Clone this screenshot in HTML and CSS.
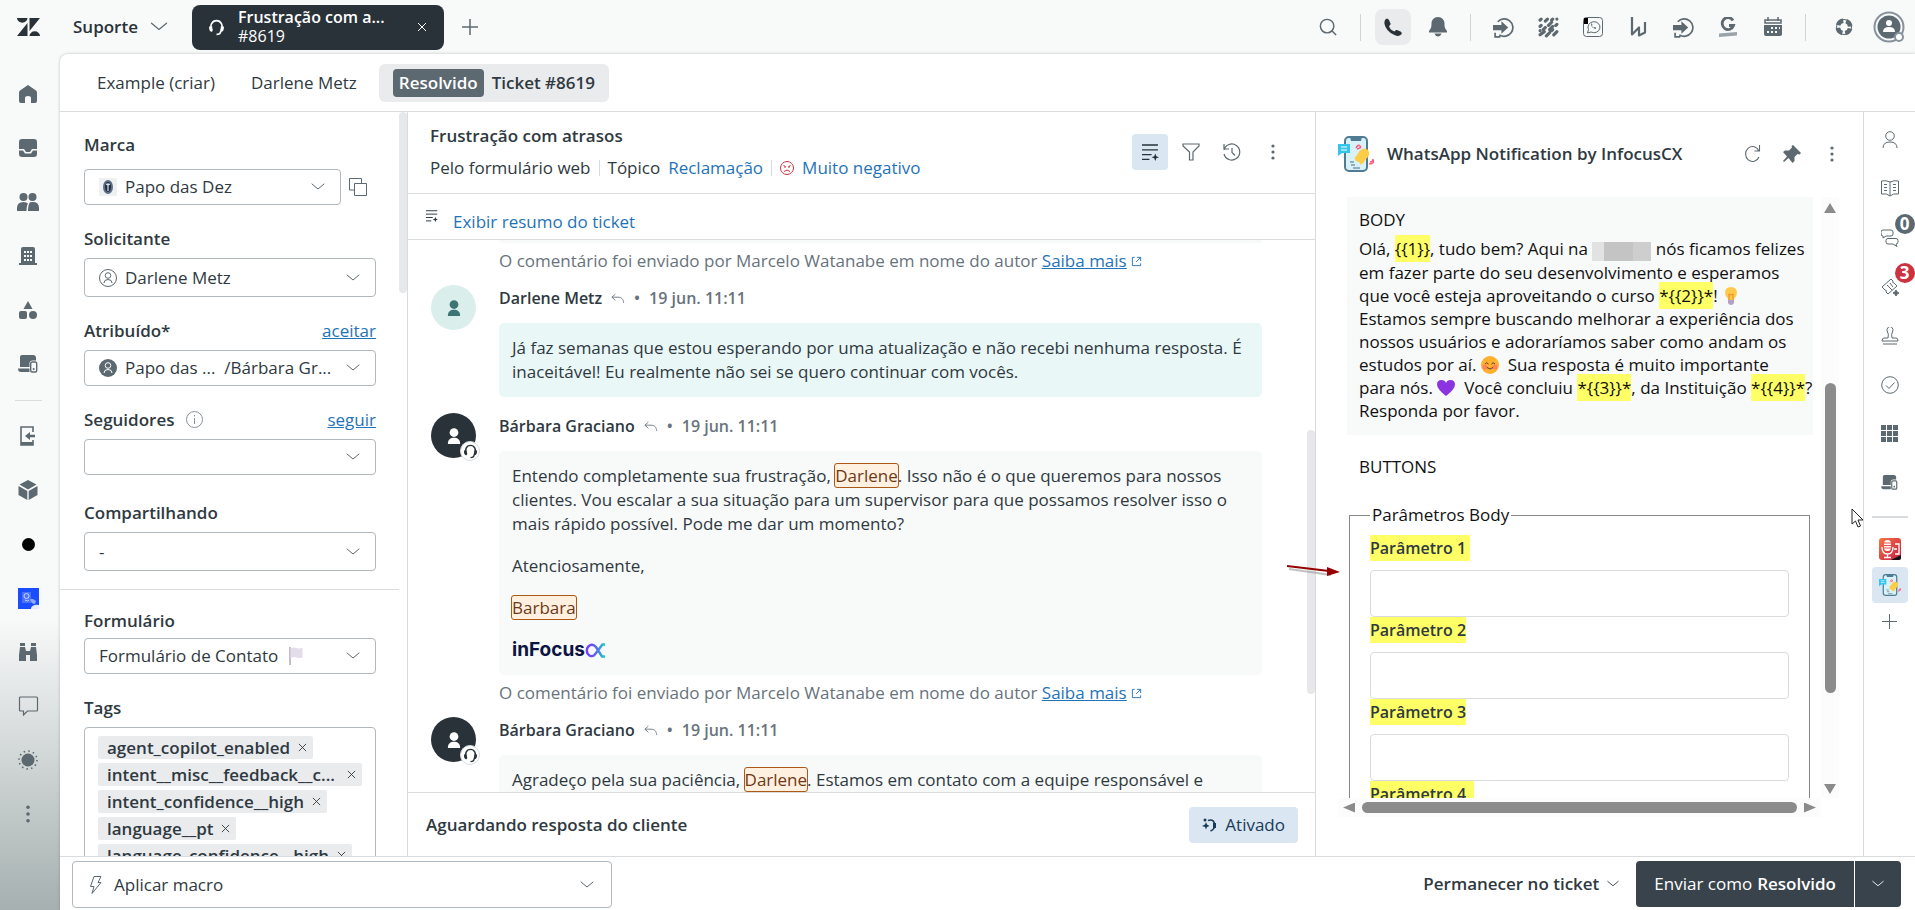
FILE: index.html
```html
<!DOCTYPE html>
<html lang="pt-BR">

<head>
  <meta charset="UTF-8" />
  <meta name="viewport" content="width=device-width, initial-scale=1.0" />
  <title>Frustração com atrasos #8619</title>
  <link rel="stylesheet" href="styles.css">
</head>

<body>
  <!-- icons used more than once -->
  <svg class="sprite" aria-hidden="true">
    <symbol id="chevron" viewBox="0 0 16 16">
      <path d="M2 5l6 5 6-5" fill="none" stroke="currentColor" stroke-linecap="round" />
    </symbol>
    <symbol id="person" viewBox="0 0 16 20">
      <circle cx="8" cy="6" r="5" />
      <path d="M1 19c0-5 3-7 7-7s7 2 7 7z" />
    </symbol>
    <symbol id="headset" viewBox="0 0 16 16">
      <path d="M4 11C1 6 4 1.500 8 1.500S15 6 12 11M12 11c0 2-1 3.500-4 3.500" fill="none" stroke="currentColor" stroke-width="1.500" />
      <path d="M1 7l3 0v5c-2 0-3-1-3-5zM15 7h-3v5c2 0 3-1 3-5z" />
    </symbol>
    <symbol id="dots" viewBox="0 0 16 16">
      <circle cx="8" cy="2" r="1.600" /><circle cx="8" cy="8" r="1.600" /><circle cx="8" cy="14" r="1.600" />
    </symbol>
    <symbol id="reply" viewBox="0 0 16 12">
      <path d="M5 1L1 4.500 5 8M1 4.500h7c4 0 6 2 6.500 6.500" fill="none" stroke="currentColor" />
    </symbol>
    <symbol id="external" viewBox="0 0 12 12">
      <path d="M4 1.500H1.500v9h9V8M6.500 1.500h4v4M10.500 1.500L5.500 6.500" fill="none" stroke="currentColor" />
    </symbol>
    <symbol id="summary" viewBox="0 0 16 16">
      <path d="M0 1h15M0 5.500h15M0 10h9M0 14.500h7" fill="none" stroke="currentColor" stroke-width="1.300" />
      <path d="M12.500 9l1 2.500 2.500 1-2.500 1-1 2.500-1-2.500-2.500-1 2.500-1z" />
    </symbol>
    <symbol id="laptop" viewBox="0 0 20 18">
      <path d="M4 0h11q3 0 3 3v2.500h-3.500q-3 0-3 3V12H2V2q0-2 2-2zM0 13.500h11.500V17H3q-3 0-3-3.500z" />
      <rect x="12.700" y="7" width="6" height="10" rx="1.500" fill="none" stroke="currentColor" stroke-width="1.400" />
      <circle cx="15.700" cy="14" r="1" />
    </symbol>
    <symbol id="enter" viewBox="0 0 20 20">
      <path d="M4.500 4.500a8.300 8.300 0 1 1 1.500 12.500M2 15v4h5" fill="none" stroke="currentColor" stroke-width="1.600" />
      <path d="M0 7.500h8V4l6.500 6L8 16v-3.500H0z" />
    </symbol>
    <symbol id="cross" viewBox="0 0 10 10">
      <path d="M1 1l8 8M9 1L1 9" fill="none" stroke="currentColor" />
    </symbol>
    <symbol id="app" viewBox="0 0 36 36">
      <rect x="7" y="1" width="22" height="34" rx="4" fill="#d9f1f8" stroke="#4f7c93" stroke-width="2" />
      <path d="M12 1h12l-1 4H13z" fill="#4f7c93" />
      <path d="M12 26h4M13 29h4M15 32h7" stroke="#8fb0bd" stroke-width="2" />
      <path d="M0 8h12v9H4l-4 3z" fill="#35c6ef" />
      <path d="M3 11h6M3 14h6" stroke="#fff" />
      <path d="M17 21c3-1 3-7 8-8 4-1 7 2 6 6-1 3-4 4-5 7l-3 3-2-3c-2 0-5-2-4-5z" fill="#ffcc45" />
      <path d="M18 12q2-4 4-2t-3 3M32 26q3 0 3-3M31 28q5 0 5-4" fill="none" stroke="#ff5b7c" stroke-width="1.500" />
    </symbol>
  </svg>

  <header class="topbar">
    <a class="brand" href="#" aria-label="Início">
      <svg width="23" height="18" viewBox="0 0 23 18"><path d="M0 0h10.500a5 4.500 0 0 1-10.500 0zM12.500 0H23L12.500 13zM10.500 5v13H0zM12.500 18a5 4.500 0 0 1 10.500 0z" /></svg>
    </a>
    <button class="product">Suporte <svg width="20" height="20"><use href="#chevron" /></svg></button>
    <div class="worktab">
      <svg width="17" height="17"><use href="#headset" /></svg>
      <div class="worktab-text"><b>Frustração com a...</b><span>#8619</span></div>
      <button aria-label="Fechar"><svg width="10" height="10"><use href="#cross" /></svg></button>
    </div>
    <button class="add" aria-label="Adicionar"><svg width="18" height="18" viewBox="0 0 18 18"><path d="M9 1v16M1 9h16" fill="none" stroke="currentColor" stroke-width="1.500" /></svg></button>
    <nav class="tools">
      <button aria-label="Pesquisar"><svg width="18" height="18" viewBox="0 0 20 20"><circle cx="9" cy="9" r="7.500" fill="none" stroke="currentColor" stroke-width="1.600" /><path d="M14 14l5 5" stroke="currentColor" stroke-width="1.600" /></svg></button>
      <i class="sep"></i>
      <button class="on" aria-label="Telefone"><svg width="18" height="18" viewBox="0 0 18 18"><path d="M1 2q2-3 4 0l1.500 3.500q.5 1.500-1.500 2.500 1 4 5.500 5.500 1-2 2.500-1.500l3.500 1.500q2.500 1.500 0 3.500-3 2-7-.5Q2 13 .5 6 .2 3.500 1 2z" /></svg></button>
      <button aria-label="Notificações"><svg width="18" height="20" viewBox="0 0 18 20"><path d="M9 0c4 0 6.500 3 6.500 6.500 0 4 .5 5 2.500 7.500v1.500H0V14c2-2.500 2.500-3.500 2.500-7.500C2.500 3 5 0 9 0zM5.500 16.500h7q-1 3-3.500 3t-3.500-3z" /></svg></button>
      <i class="sep"></i>
      <button aria-label="Redirecionar"><svg width="21" height="21"><use href="#enter" /></svg></button>
      <button aria-label="Padrões"><svg width="21" height="21" viewBox="0 0 20 20"><g fill="none" stroke="currentColor" stroke-width="3" stroke-linecap="round"><path d="M2 3l1-1M2 9l1-1M7 4l2-2M13 3l1-1M18 2v0M5 12l2-2M10 8l3-3M17 8l1-1M2 17l4-3M8 18l3-3M11 12l3-3M15 17l3-3M2 13v0M13 13l1-1" /></g></svg></button>
      <button aria-label="WhatsApp"><svg width="20" height="20" viewBox="0 0 20 20"><rect x=".5" y=".5" width="19" height="19" rx="3" fill="none" stroke="currentColor" /><path d="M4.500 16l1-3.500a6 5.500 0 1 1 2.500 2.500z" fill="none" stroke="currentColor" /><path d="M8 6.500q0 4.500 5 5.500v-1.500l-1.500-.5-1 .7-1.700-1.700.7-1-.7-1.500z" /><path d="M1 1h4v6H1z" fill="#000" /></svg></button>
      <button aria-label="Wiki"><svg width="17" height="20" viewBox="0 0 17 20"><path d="M2 0v17.500l7-7v8l6-3V5" fill="none" stroke="currentColor" stroke-width="2.200" stroke-linejoin="round" /></svg></button>
      <button aria-label="Encaminhar"><svg width="21" height="21"><use href="#enter" /></svg></button>
      <button aria-label="Google"><svg width="20" height="20" viewBox="0 0 20 20"><path d="M15 3.500a5.800 6 0 1 0 .5 5H11" fill="none" stroke="currentColor" stroke-width="2.800" /><path d="M1 16.500l18-1.500v3.500L1 20z" opacity=".6" /></svg></button>
      <button aria-label="Calendário"><svg width="20" height="20" viewBox="0 0 20 20"><path d="M1 8h18v9q0 2-2 2H3q-2 0-2-2z" /><path d="M2 3h16v3H2zM5 0v4M15 0v4" fill="none" stroke="currentColor" stroke-width="1.500" /><path d="M8 11h2m2 0h2m2 0h1M4 15h2m2 0h2m2 0h2" stroke="#f8f9f9" stroke-width="2" /></svg></button>
      <i class="sep last"></i>
      <button aria-label="Ajuda"><svg width="18" height="18" viewBox="0 0 18 18"><circle cx="9" cy="9" r="6.200" fill="none" stroke="currentColor" stroke-width="4.500" stroke-dasharray="6.740 3" stroke-dashoffset="-1.500" /><circle cx="9" cy="9" r="7.500" fill="none" stroke="currentColor" /></svg></button>
      <button class="me" aria-label="Perfil"><svg width="32" height="32" viewBox="0 0 32 32"><circle cx="16" cy="16" r="14.500" fill="none" stroke="#87929d" stroke-width="2" /><circle cx="16" cy="16" r="11.500" /><circle cx="16" cy="12" r="3" fill="#fff" /><path d="M10 21q0-5 6-5t6 5z" fill="#fff" /><circle cx="26" cy="26" r="4" fill="#fff" stroke="#87929d" stroke-width="2" /></svg></button>
    </nav>
  </header>

  <div class="shell">
    <nav class="rail">
      <a href="#" aria-label="Página inicial"><svg width="18" height="18" viewBox="0 0 18 18"><path d="M9 0l8 5.500q1 1 1 2V16q0 2-2 2h-4v-5q0-2-3-2t-3 2v5H2q-2 0-2-2V7.500q0-1 1-2z" /></svg></a>
      <a href="#" aria-label="Visualizações"><svg width="18" height="18" viewBox="0 0 18 18"><path d="M3 0h12q3 0 3 3v7h-5l-2 3H7l-2-3H0V3q0-3 3-3z" /><path d="M0 11.500h4l2 3h6l2-3h4V15q0 3-3 3H3q-3 0-3-3z" /></svg></a>
      <a href="#" aria-label="Clientes"><svg width="22" height="18" viewBox="0 0 22 18"><circle cx="6.500" cy="4" r="4" /><circle cx="15.500" cy="4" r="4" /><path d="M0 18v-3q0-6 6.500-6 3 0 4.500 1.500-1.500 2-1.500 7.500zM11 18q0-6 2-8.700Q22 8 22 15v3z" /></svg></a>
      <a href="#" aria-label="Organizações"><svg width="18" height="18" viewBox="0 0 18 18"><path fill-rule="evenodd" d="M4 0h10q2 0 2 2v14h2v2H0v-2h2V2q0-2 2-2zM5 4v2h2V4zm3 0v2h2V4zm3 0v2h2V4zM5 8v2h2V8zm3 0v2h2V8zm3 0v2h2V8zm-6 4v2h2v-2zm3 0v2h2v-2zm3 0v2h2v-2z" /></svg></a>
      <a href="#" aria-label="Objetos"><svg width="18" height="18" viewBox="0 0 18 18"><path d="M9 0l4.500 8h-9z" /><rect y="10" width="8" height="8" rx="2" /><circle cx="14" cy="14" r="4" /></svg></a>
      <a href="#" aria-label="Ativos"><svg width="20" height="18"><use href="#laptop" /></svg></a>
      <hr />
      <a href="#" aria-label="Receber"><svg width="18" height="20" viewBox="0 0 18 20"><path d="M14 6V1H2v18h12v-5" fill="none" stroke="currentColor" stroke-width="1.600" /><path d="M2 16h12v3H2zM6 10l5-4v2.700h5v2.600h-5V14z" /></svg></a>
      <a href="#" aria-label="Pacotes"><svg width="20" height="20" viewBox="0 0 20 20"><path d="M10 0l8.500 4.500L10 9.500 1.500 4.500zM.5 6l8.800 5v9L.5 15zM19.500 6l-8.800 5v9l8.800-5z" /></svg></a>
      <a href="#" aria-label="Gravador"><svg width="13" height="13" viewBox="0 0 13 13"><circle cx="6.500" cy="6.500" r="6.500" fill="#000" /></svg></a>
      <a href="#" aria-label="Chamadas"><svg width="21" height="21" viewBox="0 0 21 21"><path d="M0 0h21v21H0z" fill="#1a4dff" /><path d="M4 4h9v11H4z" fill="#4a72ff" /><circle cx="8.500" cy="8" r="2.500" fill="none" stroke="#c9d6ff" /><path d="M7 12q3 2 4 0" fill="none" stroke="#c9d6ff" /><path d="M12 11q1 5 5 5l1-3-3-2z" fill="#8fa9ff" /><path d="M13 20q2-4 8-3v4h-8z" fill="#e6ecff" /></svg></a>
      <a href="#" aria-label="Explorar"><svg width="18" height="18" viewBox="0 0 18 18"><path d="M1 0h5v3H1zM12 0h5v3h-5zM1 4h5l1 4h4l1-4h5l1 8v6h-7v-6H7v6H0v-6z" /></svg></a>
      <a href="#" aria-label="Mensagens"><svg width="21" height="20" viewBox="0 0 20 20"><path d="M2 1h16q1 0 1 1v12q0 1-1 1H9l-4 4v-4H2q-1 0-1-1V2q0-1 1-1z" fill="none" stroke="currentColor" stroke-width="1.200" /></svg></a>
      <a href="#" aria-label="Tema"><svg width="20" height="20" viewBox="0 0 20 20"><circle cx="10" cy="10" r="6.500" /><circle cx="10" cy="10" r="9" fill="none" stroke="currentColor" stroke-width="1.600" stroke-dasharray="1.500 3.212" /></svg></a>
      <a href="#" aria-label="Mais"><svg width="18" height="18"><use href="#dots" /></svg></a>
    </nav>

    <main class="card">
      <div class="crumbs">
        <a href="#">Example (criar)</a>
        <a href="#">Darlene Metz</a>
        <a class="current" href="#"><span class="status">Resolvido</span>Ticket #8619</a>
      </div>

      <div class="columns">
        <aside class="fields">
          <div class="field first">
            <div class="label-row"><label for="brand">Marca</label></div>
            <div class="brand-row">
              <div class="select">
                <svg width="18" height="18" viewBox="0 0 18 18"><path d="M0 0h18v18H0z" fill="#eff0f2" /><ellipse cx="9" cy="9" rx="5" ry="7" fill="#5d6e88" /><ellipse cx="9" cy="9" rx="3" ry="5" fill="#202d47" /><path d="M9 5v8M7 6q2 2 4 0" fill="none" stroke="#fff" /></svg>
                <select id="brand"><option>Papo das Dez</option></select>
                <svg class="caret" width="16" height="16"><use href="#chevron" /></svg>
              </div>
              <button class="copy" aria-label="Copiar"><svg width="18" height="18" viewBox="0 0 18 18"><path d="M5 12H.5V.5h12V5M5.500 5.500h12v12h-12z" fill="none" stroke="currentColor" /></svg></button>
            </div>
          </div>
          <div class="field">
            <div class="label-row"><label for="requester">Solicitante</label></div>
            <div class="select tall">
              <svg class="line" width="18" height="18" viewBox="0 0 18 18"><circle cx="9" cy="9" r="8.500" /><circle cx="9" cy="6.500" r="2.800" /><path d="M5 14q0-3.500 4-3.500t4 3.500" /></svg>
              <select id="requester"><option>Darlene Metz</option></select>
              <svg class="caret" width="16" height="16"><use href="#chevron" /></svg>
            </div>
          </div>
          <div class="field">
            <div class="label-row"><label for="assignee">Atribuído*</label><a href="#">aceitar</a></div>
            <div class="select">
              <svg width="18" height="18" viewBox="0 0 18 18"><circle cx="9" cy="9" r="9" /><g fill="none" stroke="#fff"><circle cx="9" cy="6.500" r="2.800" /><path d="M5 14q0-3.500 4-3.500t4 3.500" /></g></svg>
              <select id="assignee"><option>Papo das ... &nbsp;/Bárbara Gr...</option></select>
              <svg class="caret" width="16" height="16"><use href="#chevron" /></svg>
            </div>
          </div>
          <div class="field wide-gap">
            <div class="label-row"><label for="followers">Seguidores</label>
              <svg class="line info" width="17" height="17" viewBox="0 0 17 17"><circle cx="8.500" cy="8.500" r="8" /><path d="M8.500 7v6M8.500 4v1.500" /></svg>
              <a href="#">seguir</a></div>
            <div class="select">
              <select id="followers"><option></option></select>
              <svg class="caret" width="16" height="16"><use href="#chevron" /></svg>
            </div>
          </div>
          <div class="field">
            <div class="label-row"><label for="sharing">Compartilhando</label></div>
            <div class="select tall">
              <select id="sharing"><option>-</option></select>
              <svg class="caret" width="16" height="16"><use href="#chevron" /></svg>
            </div>
          </div>
          <hr />
          <div class="field">
            <div class="label-row"><label for="form">Formulário</label></div>
            <div class="select">
              <select id="form"><option>Formulário de Contato</option></select>
              <svg class="flag" width="16" height="18" viewBox="0 0 16 18"><path d="M1 0v18" stroke="#8c7f8e" /><path d="M1.500 1q4-1 6 0t6-.5v10q-4 1-6 0t-6 .5z" fill="#e3dcea" /></svg>
              <svg class="caret" width="16" height="16"><use href="#chevron" /></svg>
            </div>
          </div>
          <div class="field">
            <div class="label-row"><label for="tags">Tags</label></div>
            <div class="tags">
              <span class="tag">agent_copilot_enabled<button aria-label="Remover"><svg width="9" height="9"><use href="#cross" /></svg></button></span>
              <span class="tag full">intent__misc__feedback__c...<button aria-label="Remover"><svg width="9" height="9"><use href="#cross" /></svg></button></span>
              <span class="tag">intent_confidence__high<button aria-label="Remover"><svg width="9" height="9"><use href="#cross" /></svg></button></span>
              <span class="tag">language__pt<button aria-label="Remover"><svg width="9" height="9"><use href="#cross" /></svg></button></span>
              <span class="tag">language_confidence__high<button aria-label="Remover"><svg width="9" height="9"><use href="#cross" /></svg></button></span>
              <input id="tags" type="text" />
            </div>
          </div>
          <i class="thumb"></i>
        </aside>

        <section class="ticket">
          <div class="ticket-head">
            <div>
              <h1>Frustração com atrasos</h1>
              <div class="meta">
                <span>Pelo formulário web</span><i></i>
                <span>Tópico</span><a href="#">Reclamação</a><i></i>
                <svg class="line sad" width="14" height="14" viewBox="0 0 14 14"><circle cx="7" cy="7" r="6.500" /><path d="M4 10.500q3-3 6 0M3.500 4l2 2M10.500 4l-2 2M4 6h2M8 6h2" /></svg>
                <a href="#">Muito negativo</a>
              </div>
            </div>
            <div class="head-tools">
              <button class="on" aria-label="Resumo"><svg width="17" height="17"><use href="#summary" /></svg></button>
              <button aria-label="Filtrar"><svg width="18" height="18" viewBox="0 0 18 18"><path d="M1 1h16v2l-6 6v8H7.500V9L1 3z" fill="none" stroke="currentColor" stroke-width="1.200" /></svg></button>
              <button aria-label="Histórico"><svg width="18" height="18" viewBox="0 0 18 18"><path d="M1 7a8 8 0 1 1 0 4M1 1v5h5M9 5v4.500l3 3" fill="none" stroke="currentColor" stroke-width="1.200" /></svg></button>
              <button aria-label="Mais opções"><svg width="16" height="16"><use href="#dots" /></svg></button>
            </div>
          </div>
          <div class="summary"><svg width="12" height="12"><use href="#summary" /></svg><a href="#">Exibir resumo do ticket</a></div>

          <div class="log">
            <div class="previous"></div>
            <p class="note">O comentário foi enviado por Marcelo Watanabe em nome do autor <a href="#">Saiba mais</a> <svg width="11" height="11"><use href="#external" /></svg></p>
            <article class="message customer">
              <div class="avatar"><svg width="14" height="18"><use href="#person" /></svg></div>
              <div class="content">
                <div class="author"><b>Darlene Metz</b><svg width="14" height="11"><use href="#reply" /></svg><span>•</span><time>19 jun. 11:11</time></div>
                <div class="bubble"><p>Já faz semanas que estou esperando por uma atualização e não recebi nenhuma resposta. É<br>inaceitável! Eu realmente não sei se quero continuar com vocês.</p></div>
              </div>
            </article>
            <article class="message">
              <div class="avatar"><svg width="14" height="18"><use href="#person" /></svg><i class="agent"><svg width="15" height="15"><use href="#headset" /></svg></i></div>
              <div class="content">
                <div class="author"><b>Bárbara Graciano</b><svg width="14" height="11"><use href="#reply" /></svg><span>•</span><time>19 jun. 11:11</time></div>
                <div class="bubble">
                  <p>Entendo completamente sua frustração, <mark>Darlene</mark>. Isso não é o que queremos para nossos<br>clientes. Vou escalar a sua situação para um supervisor para que possamos resolver isso o<br>mais rápido possível. Pode me dar um momento?</p>
                  <p>Atenciosamente,</p>
                  <p><mark>Barbara</mark></p>
                  <p class="sign">inFocus<svg width="21" height="15" viewBox="0 0 21 15">
                      <defs>
                        <linearGradient id="cx"><stop offset="0" stop-color="#7a3cff" /><stop offset=".5" stop-color="#5a63f5" /><stop offset="1" stop-color="#18d3c0" /></linearGradient>
                      </defs>
                      <path d="M20 1.500h-2.500L9.500 12Q7 14 4.500 12.500a6 6 0 0 1 0-10Q8 .5 11 4l6 9.500h3" fill="none" stroke="url(#cx)" stroke-width="2.400" />
                    </svg></p>
                </div>
              </div>
            </article>
            <p class="note">O comentário foi enviado por Marcelo Watanabe em nome do autor <a href="#">Saiba mais</a> <svg width="11" height="11"><use href="#external" /></svg></p>
            <article class="message">
              <div class="avatar"><svg width="14" height="18"><use href="#person" /></svg><i class="agent"><svg width="15" height="15"><use href="#headset" /></svg></i></div>
              <div class="content">
                <div class="author"><b>Bárbara Graciano</b><svg width="14" height="11"><use href="#reply" /></svg><span>•</span><time>19 jun. 11:11</time></div>
                <div class="bubble"><p>Agradeço pela sua paciência, <mark>Darlene</mark>. Estamos em contato com a equipe responsável e</p></div>
              </div>
            </article>
            <i class="thumb"></i>
          </div>

          <div class="waiting">
            <b>Aguardando resposta do cliente</b>
            <button><svg width="14" height="14" viewBox="0 0 14 14"><circle cx="3" cy="2" r="1.500" /><path d="M4 4l1 2.500L7.500 8 5 9l-1 2.500L3 9 0 8l3-1.500z" /><path d="M6 2.500q5-2 6.500 3t-4 7.500" fill="none" stroke="currentColor" stroke-width="1.500" /><path d="M11 5h3v5h-3z" /></svg>Ativado</button>
          </div>
        </section>

        <section class="app">
          <div class="app-head">
            <svg width="36" height="36"><use href="#app" /></svg>
            <h2>WhatsApp Notification by InfocusCX</h2>
            <button aria-label="Atualizar"><svg width="17" height="18" viewBox="0 0 17 18"><path d="M15 12a7 7.500 0 1 1 0-6M15.500 0v6h-5" fill="none" stroke="currentColor" stroke-width="1.100" /></svg></button>
            <button aria-label="Fixar"><svg width="18" height="18" viewBox="0 0 18 18"><path d="M10 0l8 8-1.500 1.500-2-.5-3 3 0 4-2 2-4-5L1 17l-1-1 4-4.500-4-4.500 2-1.500h4l3-3L8.500 1z" /></svg></button>
            <button aria-label="Mais opções"><svg width="16" height="16"><use href="#dots" /></svg></button>
          </div>
          <div class="frame">
            <div class="doc">
              <div class="template">
                <h3>BODY</h3>
                <p>Olá, <mark>{{1}}</mark>, tudo bem? Aqui na <span class="redacted"></span> nós ficamos felizes<br>
                  em fazer parte do seu desenvolvimento e esperamos<br>
                  que você esteja aproveitando o curso <mark>*{{2}}*</mark>! <svg class="emoji" width="18" height="18" viewBox="0 0 18 18"><path d="M9 0q6 0 6 6 0 3-3 5.500V13H6v-1.500Q3 9 3 6q0-6 6-6z" fill="#ffc94d" /><path d="M7 13V7l2 1 2-1v6" fill="none" stroke="#e98a1c" /><path d="M6 13h6v3q-1 2-3 2t-3-2z" fill="#b3a0c9" /></svg><br>
                  Estamos sempre buscando melhorar a experiência dos<br>
                  nossos usuários e adoraríamos saber como andam os<br>
                  estudos por aí. <svg class="emoji" width="18" height="18" viewBox="0 0 18 18"><circle cx="9" cy="9" r="9" fill="#ffb02e" /><circle cx="4" cy="11" r="2.500" fill="#ff8257" /><circle cx="14" cy="11" r="2.500" fill="#ff8257" /><path d="M4 8q1.500-2.500 3.500 0M10.500 8q1.500-2.500 3.500 0M6 11.500q3 3 6 0" fill="none" stroke="#5b3a2e" /></svg>&nbsp; Sua resposta é muito importante<br>
                  para nós. <svg class="emoji" width="18" height="18" viewBox="0 0 18 18"><path d="M9 17Q0 10 0 5.500 0 1 4.500 1 8 1 9 4q1-3 4.500-3Q18 1 18 5.500 18 10 9 17z" fill="#8b35e0" /></svg>&nbsp; Você concluiu <mark>*{{3}}*</mark>, da Instituição <mark>*{{4}}*</mark>?<br>
                  Responda por favor.</p>
              </div>
              <h3 class="buttons-title">BUTTONS</h3>
              <fieldset>
                <legend>Parâmetros Body</legend>
                <label for="p1"><mark>Parâmetro 1&nbsp;</mark></label>
                <input id="p1" type="text" />
                <label for="p2"><mark>Parâmetro 2</mark></label>
                <input id="p2" type="text" />
                <label for="p3"><mark>Parâmetro 3</mark></label>
                <input id="p3" type="text" />
                <label for="p4"><mark>Parâmetro 4&nbsp;&nbsp;</mark></label>
                <input id="p4" type="text" />
              </fieldset>
            </div>
            <div class="vbar"><i class="arrow up"></i><i class="bar"></i><i class="arrow down"></i></div>
            <div class="hbar"><i class="arrow left"></i><i class="bar"></i><i class="arrow right"></i></div>
          </div>
          <svg class="pointer-line" width="58" height="16" viewBox="0 0 58 16"><path d="M3 5l42 6" stroke="#999" stroke-width="2" opacity=".6" /><path d="M1 2l42 5" stroke="#960000" stroke-width="2" /><path d="M41 3l13 5-13 4z" fill="#960000" /></svg>
          <svg class="cursor" width="13" height="20" viewBox="0 0 13 20"><path d="M1 1v15l3.500-3 2.500 6 2.500-1L7 12h5z" fill="#fff" stroke="#222" /></svg>
        </section>

        <nav class="apps">
          <button aria-label="Usuário"><svg width="16" height="18" viewBox="0 0 16 18"><circle cx="8" cy="5" r="4.300" /><path d="M1 17q0-6 7-6t7 6" /></svg></button>
          <button aria-label="Conhecimento"><svg width="18" height="17" viewBox="0 0 18 17"><path d="M9 2Q5 0 .5 1v13Q6 13 9 16q3-3 8.500-2V1Q13 0 9 2zv14M3 4.500h3M3 7.500h3M3 10.500h3M12 4.500h3M12 7.500h3M12 10.500h3" /></svg></button>
          <button aria-label="Conversas"><svg width="18" height="18" viewBox="0 0 18 18"><path d="M2 1h8q2 0 2 2v2q0 2-2 2H5L2 9V7Q0 7 0 5V3q0-2 2-2zM7 9.500h8q2 0 2 2V13q0 2-2 2l1 2.500-4-2.500H7q-2 0-2-2v-1.500q0-2 2-2z" /></svg><span class="badge">0</span></button>
          <button aria-label="Inteligência"><svg width="18" height="18" viewBox="0 0 18 18"><path d="M1 9l9-8 2 2q-1 2 1 2l3 3-9 8-2-2q1-2-1-2zM6 7l5 5M9 5l3 4" /><path d="M15 12l1 2 2 1-2 1-1 2-1-2-2-1 2-1z" fill="currentColor" /></svg><span class="badge red">3</span></button>
          <button aria-label="Aprovações"><svg width="18" height="18" viewBox="0 0 18 18"><path d="M7 11q1-4-.5-6a3 3.500 0 1 1 5 0Q10 7 11 11h4q2 0 2 3H1q0-3 2-3zM2 17h14" /></svg></button>
          <button aria-label="Tarefas"><svg width="18" height="18" viewBox="0 0 18 18"><circle cx="9" cy="9" r="8.300" /><path d="M5 9.500l3 3 5.500-6" /></svg></button>
          <button aria-label="Aplicativos"><svg class="solid" width="17" height="17" viewBox="0 0 17 17"><path d="M0 0h5v5H0zM6 0h5v5H6zM12 0h5v5h-5zM0 6h5v5H0zM6 6h5v5H6zM12 6h5v5h-5zM0 12h5v5H0zM6 12h5v5H6zM12 12h5v5h-5z" /></svg></button>
          <button aria-label="Ativos"><svg class="solid" width="17" height="15"><use href="#laptop" /></svg></button>
          <hr />
          <button class="compact" aria-label="Gravação"><svg class="solid" width="22" height="22" viewBox="0 0 22 22"><defs><linearGradient id="mic" y2="1"><stop offset="0" stop-color="#f77542" /><stop offset="1" stop-color="#c51c45" /></linearGradient></defs><rect width="22" height="22" rx="3" fill="url(#mic)" /><path d="M12 22l10-5v3q0 2-2 2z" fill="#111" /><rect x="5" y="2" width="7" height="11" rx="3.500" fill="#fff" /><path d="M5 5h7M5 7.500h7M5 10h7" stroke="#e64a45" /><path d="M3 9q0 7 5.500 7T14 9M8.500 16v3M5 19.500h7M16 6h4v10h-4M15 11h3" fill="none" stroke="#fff" stroke-width="1.300" /></svg></button>
          <button class="compact on" aria-label="WhatsApp Notification"><svg class="solid" width="22" height="22"><use href="#app" /></svg></button>
          <button class="compact" aria-label="Adicionar"><svg width="15" height="15" viewBox="0 0 15 15"><path d="M7.500 0v15M0 7.500h15" /></svg></button>
        </nav>
      </div>

      <footer class="actions">
        <div class="select macro">
          <svg width="13" height="18" viewBox="0 0 13 18"><path d="M5 .5h7L9 6.500h3L3 17.500l2-7H1.500z" fill="none" stroke="currentColor" /></svg>
          <select aria-label="Macro"><option>Aplicar macro</option></select>
          <svg class="caret" width="16" height="16"><use href="#chevron" /></svg>
        </div>
        <button class="stay">Permanecer no ticket <svg width="14" height="14"><use href="#chevron" /></svg></button>
        <div class="submit">
          <button>Enviar como <b>Resolvido</b></button>
          <button aria-label="Outros status"><svg width="14" height="14"><use href="#chevron" /></svg></button>
        </div>
      </footer>
    </main>
  </div>
</body>

</html>
```
FILE: styles.css
```css
* {
  box-sizing: border-box;
}

body {
  margin: 0;
  height: 100vh;
  display: flex;
  flex-direction: column;
  overflow: hidden;
  background: #f8f9f9;
  color: #2f3941;
  font-family: "Open Sans", "Noto Sans", sans-serif;
  font-size: 17px;
  line-height: 24px;
}

button,
input,
select {
  font: inherit;
  color: inherit;
}

button {
  display: flex;
  align-items: center;
  justify-content: center;
  padding: 0;
  border: none;
  background: none;
  cursor: pointer;
}

svg {
  flex: none;
  fill: currentColor;
}

.line {
  fill: none;
  stroke: currentColor;
}

a {
  color: #1f73b7;
}

b,
h1,
h2,
label {
  font-weight: 600;
}

h1,
h2,
h3,
p {
  margin: 0;
  font-size: 17px;
}

hr {
  margin: 0;
  border: none;
  border-top: 1px solid #d8dcde;
}

.sprite {
  position: absolute;
  width: 0;
  height: 0;
}

/* top bar */
.topbar {
  flex: none;
  height: 54px;
  padding-right: 8px;
  display: flex;
  align-items: center;
  color: #5c6970;
}

.brand {
  width: 60px;
  padding-left: 17px;
  display: flex;
  color: #293239;
}

.product {
  width: 96px;
  margin: 0 23px 0 13px;
  justify-content: space-between;
  color: #293239;
  font-weight: 600;
}

.product svg {
  color: #5c6970;
}

.worktab {
  width: 252px;
  height: 45px;
  padding: 0 17px 0 16px;
  display: flex;
  align-items: center;
  border-radius: 8px;
  background: #293239;
  color: #fff;
}

.worktab-text {
  flex: 1;
  padding-left: 13px;
  display: flex;
  flex-direction: column;
  font-size: 16px;
  line-height: 19px;
}

.add {
  margin-left: 17px;
}

.tools {
  margin-left: auto;
  display: flex;
  align-items: center;
}

.tools button {
  width: 36px;
  height: 36px;
  margin-right: 9px;
}

.tools .on {
  border-radius: 8px;
  background: #e9ebed;
  color: #293239;
}

.tools .me {
  margin: 0;
}

.sep {
  width: 1px;
  height: 27px;
  margin: 0 14px 0 5px;
  background: #d0d4d6;
}

.last {
  margin-right: 20px;
}

/* main navigation */
.shell {
  flex: 1;
  min-height: 0;
  display: flex;
}

.rail {
  width: 60px;
  padding: 13px 4px 0 0;
  display: flex;
  flex-direction: column;
  align-items: center;
  background: linear-gradient(#f8f9f9 66%, #a6b0b0);
  color: #5c6970;
}

.rail a {
  height: 54px;
  display: flex;
  align-items: center;
  color: inherit;
}

.rail hr {
  width: 27px;
  margin: 9px 0 8px;
}

.card {
  flex: 1;
  min-width: 0;
  display: flex;
  flex-direction: column;
  border-top-left-radius: 8px;
  background: #fff;
  box-shadow: 0 0 3px rgba(47, 57, 65, 0.3);
}

.crumbs {
  flex: none;
  height: 58px;
  padding-left: 19px;
  display: flex;
  align-items: center;
  border-bottom: 1px solid #d8dcde;
}

.crumbs a {
  padding: 0 18px;
  color: inherit;
  text-decoration: none;
}

.crumbs .current {
  height: 38px;
  margin-left: 4px;
  padding: 0 14px;
  display: flex;
  align-items: center;
  gap: 8px;
  border-radius: 6px;
  background: #e9ebed;
  font-weight: 600;
}

.status {
  padding: 2px 6px;
  border-radius: 4px;
  background: #5c6970;
  color: #fff;
}

.columns {
  flex: 1;
  min-height: 0;
  display: grid;
  grid-template-columns: 348px 1fr 548px 51px;
  grid-template-rows: minmax(0, 1fr);
}

/* ticket fields */
.fields {
  position: relative;
  overflow: hidden;
  border-right: 1px solid #d8dcde;
}

.field {
  padding: 0 31px 0 24px;
  margin-bottom: 22px;
}

.first {
  padding-top: 21px;
}

.wide-gap {
  margin-bottom: 26px;
}

.label-row {
  height: 31px;
  display: flex;
}

.first .label-row {
  height: 36px;
}

.label-row a {
  margin-left: auto;
}

.info {
  margin: 3px 0 0 12px;
  color: #87929d;
}

.select {
  position: relative;
  height: 36px;
  padding: 0 14px;
  display: flex;
  align-items: center;
  gap: 8px;
  border: 1px solid #b0b8be;
  border-radius: 4px;
  color: #5c6970;
}

.select select {
  flex: 1;
  min-width: 0;
  padding: 0;
  border: none;
  background: none;
  color: #2f3941;
  appearance: none;
}

.caret {
  pointer-events: none;
}

.tall {
  height: 39px;
}

.brand-row {
  display: flex;
  align-items: center;
  gap: 8px;
}

.brand-row .select {
  flex: 1;
}

.copy {
  margin-right: 9px;
  color: #5c6970;
}

.flag {
  position: absolute;
  left: 204px;
}

.fields hr {
  margin: -4px 8px 19px 0;
}

.fields hr + .field .label-row {
  height: 29px;
}

.tags {
  padding: 8px 13px;
  display: flex;
  flex-direction: column;
  align-items: flex-start;
  gap: 4px;
  border: 1px solid #b0b8be;
  border-radius: 4px;
}

.tag {
  height: 23px;
  padding: 0 6px 0 9px;
  display: flex;
  align-items: center;
  gap: 8px;
  border-radius: 2px;
  background: #e9ebed;
  font-weight: 600;
}

.tags .full {
  align-self: stretch;
  justify-content: space-between;
}

.tags input {
  width: 100%;
  border: none;
}

.thumb {
  position: absolute;
  top: 0;
  right: 0;
  width: 8px;
  height: 181px;
  border-radius: 4px;
  background: #e6e8ea;
}

/* conversation */
.ticket {
  min-width: 0;
  display: flex;
  flex-direction: column;
  border-right: 1px solid #d8dcde;
}

.ticket-head {
  flex: none;
  height: 82px;
  padding: 12px 24px 0 22px;
  display: flex;
  justify-content: space-between;
  border-bottom: 1px solid #d8dcde;
}

.meta {
  margin-top: 8px;
  display: flex;
  align-items: center;
  gap: 8px;
}

.meta a,
.summary a {
  text-decoration: none;
}

.meta i {
  width: 1px;
  height: 16px;
  background: #d8dcde;
}

.sad {
  color: #cc3340;
}

.head-tools {
  padding-top: 10px;
  display: flex;
  gap: 5px;
  color: #5c6970;
}

.head-tools button {
  width: 36px;
  height: 36px;
  border-radius: 4px;
}

.head-tools .on {
  background: #dae6f1;
  color: #293239;
}

.summary {
  flex: none;
  height: 46px;
  padding: 16px 18px 0;
  display: flex;
  gap: 15px;
  border-bottom: 1px solid #d8dcde;
}

.log {
  position: relative;
  flex: 1;
  min-height: 0;
  padding: 0 53px 0 23px;
  overflow: hidden;
}

.previous {
  height: 3px;
  margin-left: 68px;
  border-radius: 0 0 4px 4px;
  background: #f8f9f9;
}

.note {
  height: 26px;
  margin: 6px 0 10px 68px;
  color: #68737d;
  white-space: nowrap;
}

.note svg {
  color: #1f73b7;
}

.message {
  display: flex;
  gap: 23px;
}

.message + .message {
  margin-top: 16px;
}

.avatar {
  position: relative;
  flex: none;
  width: 45px;
  height: 45px;
  display: flex;
  align-items: center;
  justify-content: center;
  border-radius: 50%;
  background: #293239;
  color: #fff;
}

.customer .avatar {
  background: #daeeec;
  color: #3d7575;
}

.agent {
  position: absolute;
  right: -4px;
  bottom: -3px;
  width: 20px;
  height: 20px;
  display: flex;
  align-items: center;
  justify-content: center;
  border: 1px solid #d8dcde;
  border-radius: 50%;
  background: #fff;
  color: #293239;
}

.content {
  flex: 1;
  min-width: 0;
}

.author {
  height: 26px;
  margin-bottom: 12px;
  display: flex;
  align-items: center;
  gap: 9px;
  color: #68737d;
  font-size: 16px;
  font-weight: 600;
}

.author b {
  color: #2f3941;
}

.bubble {
  padding: 13px;
  border-radius: 5px;
  background: #f8f9f9;
  white-space: nowrap;
}

.customer .bubble {
  background: #eaf7f7;
}

.bubble p + p {
  margin-top: 18px;
}

.bubble mark {
  margin: 0 -1px;
  border: 1px solid #ac5918;
  border-radius: 3px;
  background: #fff0e0;
  color: #703815;
}

.bubble .sign {
  display: flex;
  align-items: center;
  color: #0b1442;
  font-family: Inter, sans-serif;
  font-size: 19px;
  font-weight: 700;
}

.log .thumb {
  top: 190px;
  height: 264px;
}

.waiting {
  flex: none;
  height: 64px;
  padding: 0 17px 0 18px;
  display: flex;
  align-items: center;
  justify-content: space-between;
  border-top: 1px solid #d8dcde;
}

.waiting button {
  height: 36px;
  padding: 0 13px;
  gap: 9px;
  border-radius: 4px;
  background: #dae6f1;
  color: #183b59;
}

/* whatsapp app */
.app {
  position: relative;
  padding-left: 22px;
  display: flex;
  flex-direction: column;
  border-right: 1px solid #d8dcde;
}

.app-head {
  height: 85px;
  padding: 0 22px 2px 0;
  display: flex;
  align-items: center;
  gap: 22px;
  color: #5c6970;
}

.app-head h2 {
  flex: 1;
  margin-left: -9px;
  color: #2f3941;
}

.app-head button {
  width: 18px;
}

.frame {
  height: 620px;
  margin-right: 24px;
  display: grid;
  grid-template-columns: 1fr 18px;
  grid-template-rows: 1fr 19px;
}

.doc {
  padding: 0 8px 0 9px;
  overflow: hidden;
  color: #111;
}

.template {
  height: 238px;
  padding: 11px 12px;
  background: #f8f9f9;
  line-height: 23px;
  white-space: nowrap;
}

.doc h3 {
  font-weight: 400;
}

.template p {
  margin-top: 6px;
}

.doc mark {
  padding: 2px 0;
  background: #ffff66;
  color: inherit;
}

.redacted {
  display: inline-block;
  width: 59px;
  height: 19px;
  background: linear-gradient(90deg, #e2e2e2 20%, #c4c4c4 20% 70%, #cecece 70%);
  vertical-align: -6px;
}

.emoji {
  vertical-align: -3px;
}

.doc .buttons-title {
  padding: 20px 12px 24px;
}

.doc fieldset {
  margin: 0 3px 0 2px;
  padding: 9px 20px 0;
  border: 1px solid #888;
}

.doc legend {
  padding: 0 2px;
}

.doc label {
  height: 34px;
  display: block;
  color: #2f3941;
  font-size: 16px;
}

.doc input {
  width: 100%;
  height: 47px;
  margin-bottom: 1px;
  display: block;
  border: 1px solid #d8dcde;
  border-radius: 4px;
}

.vbar,
.hbar {
  display: flex;
  align-items: center;
  background: #fcfcfc;
}

.vbar {
  padding: 6px 0 4px;
  flex-direction: column;
}

.vbar .bar {
  width: 11px;
  height: 310px;
  margin: 170px 0 auto;
}

.hbar {
  padding: 0 5px;
}

.hbar .bar {
  flex: 1;
  height: 11px;
  margin: 0 7px;
}

.bar {
  border-radius: 6px;
  background: #8b8b8b;
}

.arrow {
  width: 12px;
  height: 10px;
  background: #8b8b8b;
}

.up {
  clip-path: polygon(50% 0, 100% 100%, 0 100%);
}

.down {
  clip-path: polygon(0 0, 100% 0, 50% 100%);
}

.left {
  clip-path: polygon(100% 0, 100% 100%, 0 50%);
}

.right {
  clip-path: polygon(0 0, 100% 50%, 0 100%);
}

.pointer-line {
  position: absolute;
  top: 452px;
  left: -30px;
}

.cursor {
  position: absolute;
  top: 396px;
  right: -1px;
}

/* app shortcuts */
.apps {
  padding-top: 3px;
  display: flex;
  flex-direction: column;
  align-items: center;
  color: #5c6970;
}

.apps svg {
  fill: none;
  stroke: currentColor;
}

.apps .solid {
  fill: currentColor;
  stroke: none;
}

.apps button {
  position: relative;
  width: 36px;
  height: 49px;
}

.apps .compact {
  height: 36px;
  border-radius: 4px;
}

.apps .on {
  background: #dae6f1;
}

.apps hr {
  width: 36px;
  margin: 9px 0 13px;
  border-top-width: 2px;
}

.badge {
  position: absolute;
  top: 1px;
  left: 23px;
  width: 20px;
  height: 20px;
  border-radius: 50%;
  background: #5c6970;
  color: #fff;
  font-weight: 700;
  line-height: 20px;
}

.red {
  background: #cc3340;
}

/* footer */
.actions {
  flex: none;
  height: 54px;
  padding: 4px 14px 0 12px;
  display: flex;
  align-items: flex-start;
  border-top: 1px solid #d8dcde;
}

.macro {
  width: 540px;
  height: 47px;
  padding: 0 16px;
  gap: 12px;
}

.stay {
  height: 46px;
  margin: 0 16px 0 auto;
  gap: 7px;
  font-weight: 600;
}

.submit {
  display: flex;
  gap: 1px;
}

.submit button {
  height: 46px;
  padding: 0 18px;
  gap: 5px;
  border-radius: 4px 0 0 4px;
  background: #39434b;
  color: #fff;
}

.submit button + button {
  padding: 0 16px;
  border-radius: 0 4px 4px 0;
}
```
